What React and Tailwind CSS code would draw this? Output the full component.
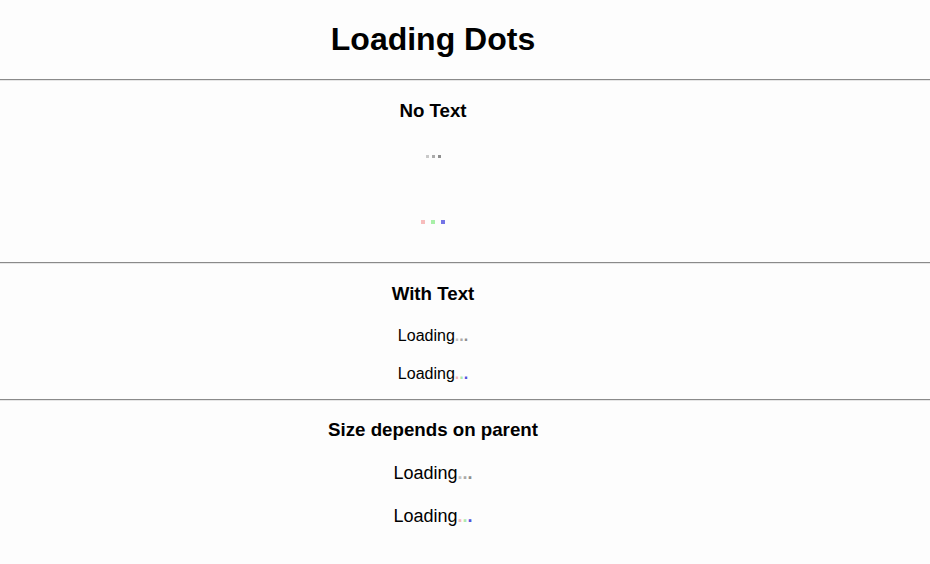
import React from 'react';

const gray = ['bg-[#c9c9c9]', 'bg-[#ababab]', 'bg-[#8f8f8f]'];
const color = ['bg-[#f7bcbc]', 'bg-[#a8f0a8]', 'bg-[#7474e6]'];
const grayText = ['text-[#c4c4c4]', 'text-[#aaaaaa]', 'text-[#8e8e8e]'];
const colorText = ['text-[#f2b8b8]', 'text-[#aeeaae]', 'text-[#5252dc]'];

const Rule = () => <div className="h-0 w-full border-t border-b border-t-[#8a8a8a] border-b-[#e6e6e6]" />;

const TextDots = ({ tones }) => (
  <span className="font-bold">
    {tones.map((c, i) => (
      <span key={i} className={c}>.</span>
    ))}
  </span>
);

export default function App() {
  return (
    <div className="min-h-[564px] w-[930px] bg-[#fdfdfd] text-black" style={{ fontFamily: '"Liberation Sans", Arial, sans-serif' }}>
      <div className="w-[866px] pt-[21px] pb-[21px] text-center">
        <h1 className="text-[32px] font-bold leading-[37px]">Loading Dots</h1>
      </div>
      <Rule />

      <div className="w-[866px] text-center">
        <h3 className="mt-[19px] text-[18.72px] font-bold leading-[21px]">No Text</h3>
        <div className="mt-[34px] flex h-[3px] justify-center gap-[3px]">
          {gray.map((c, i) => (
            <span key={i} className={`h-[3px] w-[3px] ${c}`} />
          ))}
        </div>
        <div className="mt-[62px] mb-[38px] flex h-[4px] justify-center gap-[6px]">
          {color.map((c, i) => (
            <span key={i} className={`h-[4px] w-[4px] ${c}`} />
          ))}
        </div>
      </div>
      <Rule />

      <div className="w-[866px] text-center">
        <h3 className="mt-[19px] text-[18.72px] font-bold leading-[21px]">With Text</h3>
        <div className="mt-[23px] text-[16px] leading-[18px]">
          Loading<TextDots tones={grayText} />
        </div>
        <div className="mt-[20px] mb-[16px] text-[16px] leading-[18px]">
          Loading<TextDots tones={colorText} />
        </div>
      </div>
      <Rule />

      <div className="w-[866px] text-center">
        <h3 className="mt-[18px] text-[18.72px] font-bold leading-[21px]">Size depends on parent</h3>
        <div className="mt-[23px] text-[18px] leading-[21px]">
          Loading<TextDots tones={grayText} />
        </div>
        <div className="mt-[22px] text-[18px] leading-[21px]">
          Loading<TextDots tones={colorText} />
        </div>
      </div>
    </div>
  );
}
